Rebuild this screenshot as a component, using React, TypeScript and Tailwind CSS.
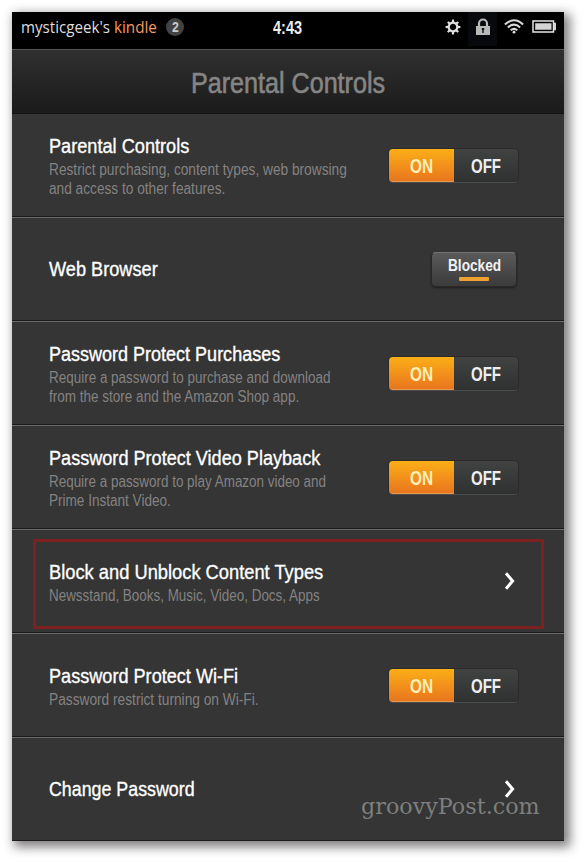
import { useLayoutEffect, useRef, useState } from 'react';
import type { ReactNode } from 'react';

/* Condenses a line of text to an exact width. */
function Line({ width, className = '', children }: { width: number; className?: string; children: ReactNode }) {
  const ref = useRef<HTMLSpanElement>(null);
  const [scale, setScale] = useState(1);
  useLayoutEffect(() => {
    if (ref.current) setScale(width / ref.current.offsetWidth);
  }, [width]);
  return (
    <span className={`block ${className}`} style={{ width }}>
      <span ref={ref} className="inline-block origin-left whitespace-nowrap" style={{ transform: `scaleX(${scale})` }}>
        {children}
      </span>
    </span>
  );
}

function Toggle() {
  return (
    <div className="mt-px flex h-[35px] w-[131px] rounded-[5px] border border-[#292a29] border-b-[#4b4c4b] text-[20px] leading-[35px] font-bold">
      <div className="flex w-[65px] justify-center rounded-l-[4px] border-b border-[#e39a52] bg-linear-to-b from-[#fbae17] to-[#e8761d] text-[#ffefb5]">
        <Line width={23}>ON</Line>
      </div>
      <div className="flex flex-1 justify-center rounded-r-[4px] bg-linear-to-b from-[#414242] to-[#303131] text-[#efefef]">
        <Line width={30}>OFF</Line>
      </div>
    </div>
  );
}

function Chevron() {
  return (
    <svg className="mr-[3px] h-[20px] w-[12px]" viewBox="0 0 12 20" fill="none" stroke="#fff" strokeWidth="3">
      <path d="M2 2.2 8.6 10 2 17.8" />
    </svg>
  );
}

type RowProps = { title: [string, number]; lines?: [string, number][]; control: ReactNode; pad: string; marked?: boolean };

function Row({ title, lines = [], control, pad, marked }: RowProps) {
  return (
    <div className="relative flex h-[104px] shrink-0 justify-between border-t border-b border-t-[#686969] border-b-[#1b1c1b] bg-[#343534] pr-[45px] pl-[37px]">
      <div className={pad}>
        <Line width={title[1]} className="h-[26px] text-[20.5px] leading-[24px] text-white [-webkit-text-stroke:0.35px_white]">
          {title[0]}
        </Line>
        {lines.map(([text, width]) => (
          <Line key={text} width={width} className="h-[19px] text-[16px] leading-[19px] text-[#858282]">
            {text}
          </Line>
        ))}
      </div>
      <div className="flex items-center">{control}</div>
      {marked && <div className="absolute top-[9px] left-[21px] h-[90px] w-[511px] border-[3px] border-[#7d2020]" />}
    </div>
  );
}

const teeth = [0, 45, 90, 135, 180, 225, 270, 315];

export default function App() {
  return (
    <div className="h-[862px] w-[584px] overflow-hidden bg-white pt-[12px] pl-[12px] font-['Liberation_Sans',Arial,sans-serif]">
      <div className="relative flex h-[829px] w-[552px] flex-col bg-[#343534] shadow-[4px_4px_10px_2px_rgba(60,54,56,0.64)]">
        <div className="flex h-[37px] shrink-0 items-start bg-black pl-[9px]">
          <div className="flex w-[145px] gap-[4px] pt-[3px] font-['Open_Sans',sans-serif] text-[17px] leading-[24px]">
            <Line width={89} className="text-[#dedede]">mysticgeek's</Line>
            <Line width={43} className="text-[#f49a62]">kindle</Line>
          </div>
          <div className="mt-[6px] flex h-[18px] w-[18px] items-center justify-center rounded-full bg-[#424242] text-[14px] leading-[18px] font-bold text-[#c9c9c9]">
            <Line width={7}>2</Line>
          </div>
          <div className="ml-[89px] pt-[4px] text-[18px] leading-[24px] font-bold text-[#ececec]">
            <Line width={29}>4:43</Line>
          </div>
          <svg className="mt-[7px] ml-[143px] h-[16px] w-[16px]" viewBox="-8 -8 16 16">
            <circle r="4.3" fill="none" stroke="#e2e2e2" strokeWidth="2.2" />
            {teeth.map((a) => (
              <path key={a} d="M-1.3-4.8-.9-7.4H.9L1.3-4.8Z" fill="#e2e2e2" transform={`rotate(${a})`} />
            ))}
          </svg>
          <div className="ml-[7px] flex h-[34px] w-[29px] justify-center bg-[#08090d] pt-[6px]">
            <svg className="h-[18px] w-[16px]" viewBox="0 0 16 18">
              <path d="M4 9V5.5a4 4 0 0 1 8 0V9" fill="none" stroke="#b9b9b9" strokeWidth="2.2" />
              <rect x="1" y="8" width="14" height="9" fill="#b9b9b9" />
              <path d="M6.8 10h2.4v2H8.7v3H7.3v-3h-.5Z" fill="#111" />
            </svg>
          </div>
          <svg className="mt-[6px] ml-[7px] h-[16px] w-[20px]" viewBox="0 0 20 16" fill="none" stroke="#dadada" strokeWidth="2">
            <path d="M.9 6.4q9.1-8.2 18.2 0M3.9 9.4q6.1-5.5 12.2 0M6.7 12.3q3.3-2.9 6.6 0" />
            <circle cx="10" cy="14.2" r="1.4" fill="#dadada" stroke="none" />
          </svg>
          <svg className="mt-[8px] ml-[8px] h-[13px] w-[25px]" viewBox="0 0 25 13">
            <rect x="1" y="1" width="20.5" height="11" fill="none" stroke="#e5e5e5" strokeWidth="1.5" />
            <path d="M3.2 3.2h16.3v6.6H3.2ZM22 2.8h2v7.4h-2Z" fill="#d5d5d5" />
          </svg>
        </div>
        <div className="flex h-[65px] shrink-0 justify-center border-t border-b border-t-[#555] border-b-[#121212] bg-linear-to-b from-[#303030] to-[#1b1b1b] pt-[16px] text-[29px] leading-[34px] text-[#858585] [-webkit-text-stroke:0.6px_#858585]">
          <Line width={194}>Parental Controls</Line>
        </div>
        <div className="flex h-[727px] flex-col overflow-hidden">
          <div className="-mt-px flex flex-col">
            <Row title={['Parental Controls', 140]} lines={[['Restrict purchasing, content types, web browsing', 298], ['and access to other features.', 176]]} pad="pt-[20px]" control={<Toggle />} />
            <Row
              title={['Web Browser', 109]}
              pad="pt-[39px]"
              control={
                <div className="mr-[2px] flex h-[35px] w-[86px] flex-col items-center rounded-[5px] border border-[#292929] border-t-[#747474] bg-linear-to-b from-[#5b5a5b] to-[#3c3b3c] pt-[2px] text-[16.5px] leading-[20px] font-bold text-[#f2f2f2] shadow-[0_1px_2px_#1d1d1d]">
                  <Line width={53} className="h-[20px]">Blocked</Line>
                  <div className="mt-[2px] h-[4px] w-[30px] rounded-[1px] bg-[#eea12e]" />
                </div>
              }
            />
            <Row title={['Password Protect Purchases', 231]} lines={[['Require a password to purchase and download', 281], ['from the store and the Amazon Shop app.', 250]]} pad="pt-[20px]" control={<Toggle />} />
            <Row title={['Password Protect Video Playback', 271]} lines={[['Require a password to play Amazon video and', 277], ['Prime Instant Video.', 122]]} pad="pt-[20px]" control={<Toggle />} />
            <Row title={['Block and Unblock Content Types', 274]} lines={[['Newsstand, Books, Music, Video, Docs, Apps', 271]]} pad="pt-[30px]" control={<Chevron />} marked />
            <Row title={['Password Protect Wi-Fi', 189]} lines={[['Password restrict turning on Wi-Fi.', 210]]} pad="pt-[30px]" control={<Toggle />} />
            <Row title={['Change Password', 146]} pad="pt-[39px]" control={<Chevron />} />
          </div>
        </div>
        <div className="absolute top-[780px] left-[349px] font-['DejaVu_Serif',serif] text-[22px] leading-[30px] text-[#7e7f7e]">
          <Line width={179}>groovyPost.com</Line>
        </div>
      </div>
    </div>
  );
}
